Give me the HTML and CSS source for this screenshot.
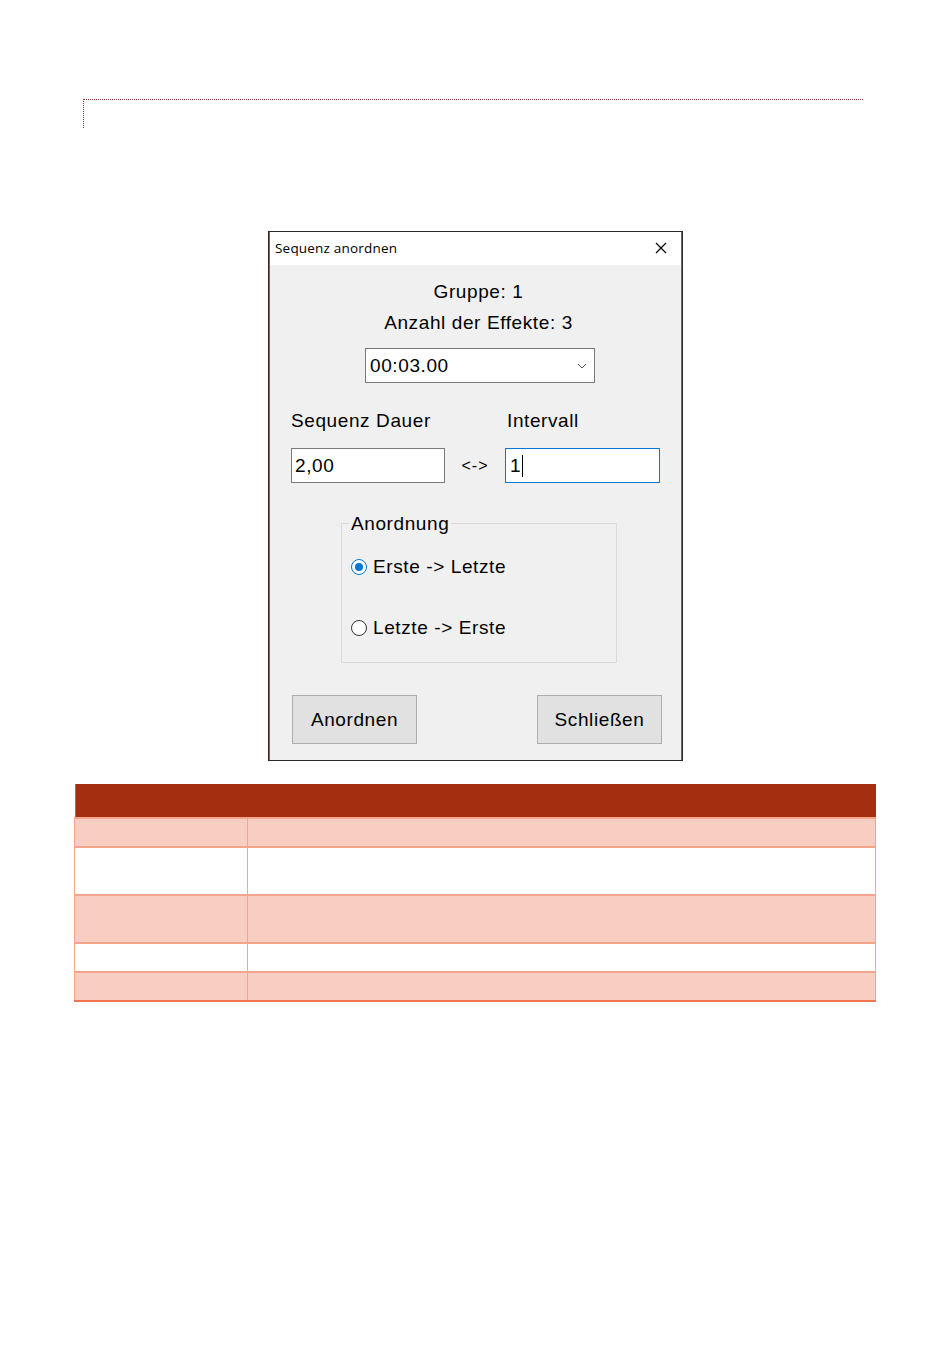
FILE: index.html
```html
<!DOCTYPE html>
<html lang="de">
<head>
<meta charset="utf-8">
<title>Sequenz anordnen</title>
<link rel="stylesheet" href="styles.css">
</head>
<body>
<div class="page">
  <div class="corner"></div>

  <div class="dialog">
    <div class="titlebar">
      <span class="title">Sequenz anordnen</span>
      <svg class="close" width="12" height="12" viewBox="0 0 12 12"><path d="M1 1 L11 11 M11 1 L1 11" stroke="#000" stroke-width="1.2" fill="none"/></svg>
    </div>
    <div class="client">
      <div class="label center l-gruppe">Gruppe: 1</div>
      <div class="label center l-anzahl">Anzahl der Effekte: 3</div>
      <div class="combo">
        <span class="combo-text">00:03.00</span>
        <svg class="chev" width="10" height="6" viewBox="0 0 10 6"><path d="M1 1 L5 5 L9 1" stroke="#555" stroke-width="1" fill="none"/></svg>
      </div>
      <div class="row-labels">
        <span class="label lab-dauer">Sequenz Dauer</span>
        <span class="label lab-int">Intervall</span>
      </div>
      <div class="row-inputs">
        <div class="field">2,00</div>
        <span class="arrow">&lt;-&gt;</span>
        <div class="field focus">1<span class="caret"></span></div>
      </div>
      <div class="group">
        <span class="legend">Anordnung</span>
        <div class="radio r1"><span class="dot checked"></span><span>Erste -&gt; Letzte</span></div>
        <div class="radio r2"><span class="dot"></span><span>Letzte -&gt; Erste</span></div>
      </div>
      <div class="buttons">
        <div class="btn">Anordnen</div>
        <div class="btn">Schließen</div>
      </div>
    </div>
  </div>

  <table class="grid">
    <tr class="head"><th class="c1"></th><th></th></tr>
    <tr class="odd h29"><td class="c1"></td><td></td></tr>
    <tr class="even h48"><td class="c1"></td><td></td></tr>
    <tr class="odd h48"><td class="c1"></td><td></td></tr>
    <tr class="even h29"><td class="c1"></td><td></td></tr>
    <tr class="odd h29 last"><td class="c1"></td><td></td></tr>
  </table>
</div>
</body>
</html>
```

FILE: styles.css
```css
html, body {
  margin: 0;
  padding: 0;
  background: #fff;
}
.page {
  width: 950px;
  height: 1369px;
  font-family: "Liberation Sans", Arial, sans-serif;
  padding-top: 99px;
  box-sizing: border-box;
}
.corner {
  margin-left: 83px;
  width: 780px;
  height: 29px;
  border-top: 1px dotted #8a3a2a;
  border-left: 1px dotted #8a3a2a;
  box-sizing: border-box;
}
.dialog {
  margin-top: 103px;
  margin-left: 268px;
  width: 415px;
  height: 530px;
  box-sizing: border-box;
  border: 1px solid #2a2a2a;
  background: #1a7fd4;
  padding: 0 1px;
  display: flex;
  flex-direction: column;
}
.titlebar {
  height: 33px;
  background: #fff;
  display: flex;
  align-items: center;
  justify-content: space-between;
  padding: 0 14px 0 5px;
  box-sizing: border-box;
}
.title {
  font-family: "Open Sans", "Noto Sans", sans-serif;
  font-size: 13.5px;
  color: #000;
  letter-spacing: 0.2px;
  margin-top: -2px;
}
.close { margin-top: -2px; }
.client {
  flex: 1;
  display: flex;
  flex-direction: column;
  font-size: 19px;
  letter-spacing: 0.6px;
  color: #000;
  background: #f0f0f0;
}
.label { line-height: 22px; }
.center { text-align: center; }
.l-gruppe { margin-top: 16px; margin-left: 6px; }
.l-anzahl { margin-top: 9px; margin-left: 6px; }
.combo {
  margin-top: 14px;
  margin-left: 95px;
  width: 230px;
  height: 35px;
  box-sizing: border-box;
  background: #fff;
  border: 1px solid #7a7a7a;
  display: flex;
  align-items: center;
  justify-content: space-between;
  padding: 0 7px 0 4px;
}
.combo-text { line-height: 20px; }
.row-labels {
  margin-top: 27px;
  display: flex;
  height: 22px;
}
.lab-dauer { width: 216px; margin-left: 21px; }
.row-inputs {
  margin-top: 16px;
  display: flex;
  align-items: center;
  height: 35px;
}
.field {
  width: 154px;
  height: 35px;
  box-sizing: border-box;
  background: #fff;
  border: 1px solid #7a7a7a;
  display: flex;
  align-items: center;
  padding-left: 3px;
  line-height: 20px;
}
.row-inputs .field:first-child { margin-left: 21px; }
.field.focus {
  border-color: #0078d7;
  width: 155px;
  padding-left: 4px;
}
.caret {
  display: inline-block;
  width: 1px;
  height: 22px;
  background: #000;
  margin-left: 1px;
}
.arrow {
  width: 60px;
  text-align: center;
  font-size: 16px;
  letter-spacing: 1px;
}
.group {
  margin-top: 40px;
  margin-left: 71px;
  width: 276px;
  height: 140px;
  box-sizing: border-box;
  border: 1px solid #dcdcdc;
  position: relative;
  display: flex;
  flex-direction: column;
}
.legend {
  position: absolute;
  top: -11px;
  left: 7px;
  background: #f0f0f0;
  padding: 0 2px;
  line-height: 22px;
}
.radio {
  display: flex;
  align-items: center;
  margin-left: 9px;
  height: 22px;
}
.r1 { margin-top: 32px; }
.r2 { margin-top: 39px; }
.dot {
  width: 16px;
  height: 16px;
  box-sizing: border-box;
  border-radius: 50%;
  border: 1px solid #333;
  background: #fff;
  margin-right: 6px;
  position: relative;
}
.dot.checked { border-color: #0078d7; }
.dot.checked::after {
  content: "";
  position: absolute;
  left: 3px;
  top: 3px;
  width: 8px;
  height: 8px;
  border-radius: 50%;
  background: #0078d7;
}
.buttons {
  margin-top: 32px;
  display: flex;
  justify-content: space-between;
  padding: 0 19px 0 22px;
}
.btn {
  width: 125px;
  height: 49px;
  box-sizing: border-box;
  background: #e1e1e1;
  border: 1px solid #adadad;
  display: flex;
  align-items: center;
  justify-content: center;
}
.grid {
  margin-top: 23px;
  margin-left: 74px;
  width: 802px;
  border-collapse: collapse;
  table-layout: fixed;
}
.grid th, .grid td { padding: 0; }
.grid .head th {
  background: #a42f10;
  height: 33px;
}
.grid .head th.c1 { box-shadow: inset 1px 0 0 #c86a52; }
.grid .c1 { width: 173px; }
.grid td {
  border: 1px solid #f4a58c;
  border-top: 2px solid #f4a58c;
}
.grid .odd td { background: #f8cdc2; }
.grid .even td { background: #fff; }
.grid .h29 td { height: 27px; }
.grid .h48 td { height: 46px; }
.grid .last td { border-bottom: 2px solid #ef7450; }
```
